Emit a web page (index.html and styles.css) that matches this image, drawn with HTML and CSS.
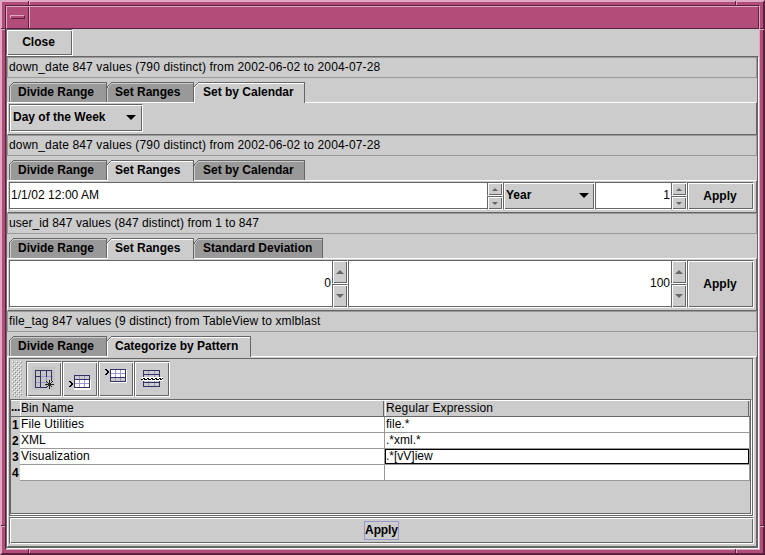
FILE: index.html
```html
<!DOCTYPE html>
<html lang="en">
<head>
<meta charset="utf-8">
<title>Bins</title>
<link rel="stylesheet" href="styles.css">
</head>
<body>
<div class="frame"><div class="frame-inner">
  <i class="tick v t l"></i><i class="tick v t r"></i><i class="tick v b l"></i><i class="tick v b r"></i>
  <i class="tick h t l"></i><i class="tick h t r"></i><i class="tick h b l"></i><i class="tick h b r"></i>
  <header class="titlebar"><div class="menu-box"><span></span></div></header>
  <div class="client">
    <div class="top"><button class="metal close">Close</button></div>
    <main class="stack">
      <section>
        <p class="label date">down_date 847 values (790 distinct) from 2002-06-02 to 2004-07-28</p>
        <nav class="tabs">
          <div class="tab w1"><svg class="corner"><use href="#cut"/></svg>Divide Range</div>
          <div class="tab w2"><svg class="corner"><use href="#cut"/></svg>Set Ranges</div>
          <div class="tab w3 on"><svg class="corner"><use href="#cut-on"/></svg>Set by Calendar</div>
        </nav>
        <div class="body short">
          <div class="metal combo day">Day of the Week<i class="drop"></i></div>
        </div>
      </section>
      <section>
        <p class="label date">down_date 847 values (790 distinct) from 2002-06-02 to 2004-07-28</p>
        <nav class="tabs">
          <div class="tab w1"><svg class="corner"><use href="#cut"/></svg>Divide Range</div>
          <div class="tab w2 on"><svg class="corner"><use href="#cut-on"/></svg>Set Ranges</div>
          <div class="tab w3"><svg class="corner"><use href="#cut"/></svg>Set by Calendar</div>
        </nav>
        <div class="body short">
          <div class="spinner grow"><div class="field left">1/1/02 12:00 AM</div><div class="arrows"><b class="metal up"></b><b class="metal down"></b></div></div>
          <div class="metal combo year">Year<i class="drop"></i></div>
          <div class="spinner narrow"><div class="field">1</div><div class="arrows"><b class="metal up"></b><b class="metal down"></b></div></div>
          <button class="metal apply">Apply</button>
        </div>
      </section>
      <section>
        <p class="label user">user_id 847 values (847 distinct) from 1 to 847</p>
        <nav class="tabs">
          <div class="tab w1"><svg class="corner"><use href="#cut"/></svg>Divide Range</div>
          <div class="tab w2 on"><svg class="corner"><use href="#cut-on"/></svg>Set Ranges</div>
          <div class="tab w4"><svg class="corner"><use href="#cut"/></svg>Standard Deviation</div>
        </nav>
        <div class="body tall">
          <div class="spinner grow"><div class="field">0</div><div class="arrows"><b class="metal up"></b><b class="metal down"></b></div></div>
          <div class="spinner grow"><div class="field">100</div><div class="arrows"><b class="metal up"></b><b class="metal down"></b></div></div>
          <button class="metal apply">Apply</button>
        </div>
      </section>
      <section class="last">
        <p class="label file">file_tag 847 values (9 distinct) from TableView to xmlblast</p>
        <nav class="tabs">
          <div class="tab w1"><svg class="corner"><use href="#cut"/></svg>Divide Range</div>
          <div class="tab w5 on"><svg class="corner"><use href="#cut-on"/></svg>Categorize by Pattern</div>
        </nav>
        <div class="body column">
          <div class="sunken editor">
            <div class="toolbar">
              <i class="grip"></i>
              <button class="metal tool"><svg width="32" height="32" shape-rendering="crispEdges">
                <path fill="#c4c4c4" d="M4 4h23v23H4z"/>
                <path stroke="#99c" fill="none" d="M12.5 8v17M18.5 8v17M7 13.5h18M7 19.5h18"/>
                <path stroke="#336" fill="none" d="M7.5 7.5h16v17h-16zM12.5 8v17M18.5 8v6M8 13.5h4"/>
                <path fill="#c4c4c4" d="M19 18h8v8h-8z"/>
                <path stroke="#222" fill="none" d="M21.5 17v9M17 21.5h9M18.5 18.5l6 6M24.5 18.5l-6 6"/></svg></button>
              <button class="metal tool"><svg width="32" height="32" shape-rendering="crispEdges">
                <path fill="#fff" d="M10 17h17v10H10z"/><path fill="#ccc" d="M11 13h14v4H11z"/>
                <path stroke="#99c" fill="none" d="M15.5 13v12M20.5 13v12"/>
                <path stroke="#336" fill="none" d="M10.5 12.5h15v12h-15zM10 16.5h15"/><path stroke="#99c" d="M11 20.5h14"/>
                <path fill="#000" d="M5 18h2v1h1v1h1v2H8v1H7v1H5v-1h1v-1h1v-2H6v-1H5z"/></svg></button>
              <button class="metal tool"><svg width="32" height="32" shape-rendering="crispEdges">
                <path fill="#fff" d="M10 7h17v13H10z"/><path fill="#ccc" d="M11 15h14v3H11z"/>
                <path stroke="#99c" fill="none" d="M15.5 7v12M20.5 7v12M11 10.5h14"/>
                <path stroke="#336" fill="none" d="M10.5 6.5h15v12h-15zM10 14.5h15"/>
                <path fill="#000" d="M5 6h2v1h1v1h1v2H8v1H7v1H5v-1h1v-1h1V8H6V7H5z"/></svg></button>
              <button class="metal tool"><svg width="32" height="32" shape-rendering="crispEdges">
                <path stroke="#99c" fill="none" d="M12.5 8v16M18.5 8v16"/>
                <path stroke="#336" fill="none" d="M7.5 7.5h16v16h-16zM7 11.5h16M7 19.5h16"/>
                <path fill="#fff" d="M6 14h21v4H6z"/>
                <path stroke="#000" stroke-width="1" fill="none" d="M5 16.5h2M7 15.5h2M8 16.5h3M11 15.5h2M12 16.5h3M15 15.5h2M16 16.5h3M19 15.5h2M20 16.5h3M23 15.5h2M24 16.5h2M26 15.5h1"/></svg></button>
            </div>
            <div class="sunken scroll">
              <div class="row head"><b>...</b><span>Bin Name</span><span class="spaced">Regular Expression</span></div>
              <div class="row"><b>1</b><span class="spaced">File Utilities</span><span>file.*</span></div>
              <div class="row"><b>2</b><span>XML</span><span>.*xml.*</span></div>
              <div class="row"><b>3</b><span class="spaced">Visualization</span><span class="active">.*[vV]iew</span></div>
              <div class="row"><b>4</b><span></span><span></span></div>
            </div>
          </div>
          <button class="metal wide"><span>Apply</span></button>
        </div>
      </section>
    </main>
  </div>
</div></div>
<svg class="defs" width="0" height="0">
  <symbol id="cut" viewBox="0 0 6 6"><path fill="#ccc" d="M0 0h5v1H4v1H3v1H2v1H1v1H0z"/><path fill="#666" d="M5 0h1v1H5zM4 0h1v1H4zM3 1h1v1H3zM2 2h1v1H2zM1 3h1v1H1zM0 4h1v2H0z"/><path fill="#ccc" d="M4 1h2v1H4zM3 2h1v1H3zM2 3h1v1H2zM1 4h1v2H1z"/></symbol>
  <symbol id="cut-on" viewBox="0 0 6 6"><path fill="#ccc" d="M0 0h6v6H0z"/><path fill="#666" d="M4 0h2v1H4zM3 1h1v1H3zM2 2h1v1H2zM1 3h1v1H1zM0 4h1v1H0z"/><path fill="#fff" d="M4 1h2v1H4zM3 2h1v1H3zM2 3h1v1H2zM1 4h1v1H1zM0 5h1v1H0z"/></symbol>
</svg>
</body>
</html>
```
FILE: styles.css
```css
* { box-sizing: border-box; }
body { margin: 0; width: 765px; height: 555px; overflow: hidden; font: 12px/14px "Liberation Sans", Arial, sans-serif; color: #000; background: #ccc; }
p { margin: 0; }
button { font: inherit; font-weight: bold; color: inherit; padding: 0; display: flex; align-items: center; justify-content: center; }
.defs { position: absolute; }

.frame { height: 555px; border: 2px solid; border-color: #dfa9c3 #5a213f #5a213f #dfa9c3; background: #b24d7a; padding: 3px; }
.frame-inner { position: relative; height: 545px; border: 1px solid; border-color: #5a213f #dfa9c3 #dfa9c3 #5a213f; }
.tick { position: absolute; }
.tick.v { width: 2px; height: 4px; border-left: 1px solid #5a213f; background: #dfa9c3; }
.tick.h { height: 2px; width: 4px; border-top: 1px solid #5a213f; background: #dfa9c3; }
.v.t { top: -5px; } .v.b { bottom: -4px; } .v.l { left: 22px; } .v.r { right: 22px; }
.h.l { left: -5px; } .h.r { right: -5px; } .h.t { top: 22px; } .h.b { bottom: 22px; }
.titlebar { height: 23px; border: 1px solid; border-color: #dfa9c3 #5a213f #5a213f #dfa9c3; }
.menu-box { width: 23px; height: 21px; border-right: 1px solid #dfa9c3; box-shadow: inset -1px 0 #5a213f; padding: 8px 0 0 3px; }
.menu-box span { display: block; width: 15px; height: 4px; border: 1px solid; border-color: #dfa9c3 #5a213f #5a213f #dfa9c3; }

.client { height: 520px; background: #ccc; display: flex; flex-direction: column; }
.top { height: 27px; border-left: 1px solid #666; display: flex; }
.metal { background: #ccc; border: 1px solid; border-color: #666 #fff #fff #666; box-shadow: inset 1px 1px #fff, inset -1px -1px #666; }
.close { width: 67px; margin-left: -1px; padding: 0 2px 1px 0; }
.stack { flex: 1; border: 1px solid; border-color: #666 #fff #fff #666; box-shadow: inset -1px -1px #666; padding: 0 1px 1px 0; display: flex; flex-direction: column; }
.last { flex: 1; display: flex; flex-direction: column; }
.label { height: 21px; border: 1px solid #999; padding: 2px 0 0 1px; margin-bottom: 4px; white-space: pre; }
.date { letter-spacing: .14px; }
.user { letter-spacing: .07px; }
.file { letter-spacing: .12px; }

.tabs { display: flex; height: 20px; padding-left: 2px; }
.tab { position: relative; height: 20px; background: #999; border-top: 1px solid #666; border-right: 1px solid #666; box-shadow: inset 0 1px #ccc, inset 1px 0 #ccc; padding: 2px 0 0 8px; font-weight: bold; white-space: pre; }
.tab:first-child { border-left: 1px solid #666; }
.tab.on { height: 21px; background: #ccc; box-shadow: inset 1px 1px #fff; z-index: 1; }
.corner { position: absolute; left: 0; top: -1px; width: 6px; height: 6px; }
.tab:first-child .corner { left: -1px; }
.w1 { width: 98px; } .w2 { width: 87px; } .w3 { width: 111px; } .w4 { width: 129px; } .w5 { width: 144px; }
.w3, .w4 { padding-left: 9px; }

.body { border: 1px solid; border-color: #fff #666 #666 #fff; padding: 1px 2px 2px 1px; display: flex; }
.short { height: 33px; }
.tall { height: 53px; }
.combo { display: flex; align-items: center; justify-content: space-between; padding: 0 6px 3px 3px; font-weight: bold; white-space: pre; }
.day { width: 134px; }
.year { width: 92px; padding-left: 2px; padding-right: 5px; }
.drop { border: solid transparent; border-width: 5px 5px 0; border-top-color: #000; margin-top: 2px; }
.spinner { display: flex; }
.grow { flex: 1; }
.narrow { width: 92px; }
.field { flex: 1; background: #fff; border: solid; border-width: 1px 0 1px 1px; border-color: #666 #fff #fff #666; box-shadow: inset 0 -1px #666; display: flex; align-items: center; justify-content: flex-end; padding: 0 1px 3px 1px; }
.tall .field { padding-bottom: 2px; }
.field.left { justify-content: flex-start; letter-spacing: .05px; }
.arrows { width: 16px; display: flex; flex-direction: column; }
.arrows b { flex: 1; display: flex; align-items: center; justify-content: center; }
.arrows b::before { content: ""; border: solid transparent; }
.arrows .up::before { border-width: 0 3px 3px; border-bottom-color: #666; }
.arrows .down::before { border-width: 3px 3px 0; border-top-color: #666; }
.tall .up::before { border-width: 0 4px 4px; }
.tall .down::before { border-width: 4px 4px 0; }
.apply { width: 67px; padding-right: 1px; }

.column { flex: 1; flex-direction: column; }
.sunken { border: 1px solid; border-color: #666 #fff #fff #666; box-shadow: inset -1px -1px #666; padding: 0 1px 1px 0; }
.editor { height: 159px; display: flex; flex-direction: column; }
.toolbar { height: 40px; padding: 2px; display: flex; }
.grip { width: 10px; margin-right: 4px; background:
  conic-gradient(from 270deg at 1px 1px, #fff 90deg, transparent 0) 0 0 / 4px 4px,
  conic-gradient(from 270deg at 1px 1px, #888 90deg, transparent 0) 1px 1px / 4px 4px,
  conic-gradient(from 270deg at 1px 1px, #fff 90deg, transparent 0) 2px 2px / 4px 4px,
  conic-gradient(from 270deg at 1px 1px, #888 90deg, transparent 0) 3px 3px / 4px 4px; }
.tool { width: 36px; height: 36px; }
.tool svg { flex: none; }
.scroll { flex: 1; }
.row { display: flex; height: 16px; }
.row b { width: 9px; padding: 1px 0 0 1px; overflow: hidden; }
.row span { width: 365px; background: #fff; border-right: 1px solid #999; border-bottom: 1px solid #999; padding-left: 1px; white-space: pre; }
.row .spaced { letter-spacing: .13px; }
.head { height: 17px; border-bottom: 1px solid #666; box-shadow: inset 0 1px #fff; }
.head b { padding: 0; letter-spacing: -.3px; }
.head span { background: #ccc; border: 0; border-top: 1px solid #fff; border-left: 1px solid #fff; box-shadow: inset -1px 0 #ccc, inset -2px 0 #666; padding-left: 0; }
.row .active { position: relative; }
.active::after { content: ""; position: absolute; inset: 0; border: 1px solid #000; }
.wide { height: 27px; }
.wide span { width: 35px; height: 19px; border: 1px solid #99c; line-height: 17px; letter-spacing: -.1px; }
```
